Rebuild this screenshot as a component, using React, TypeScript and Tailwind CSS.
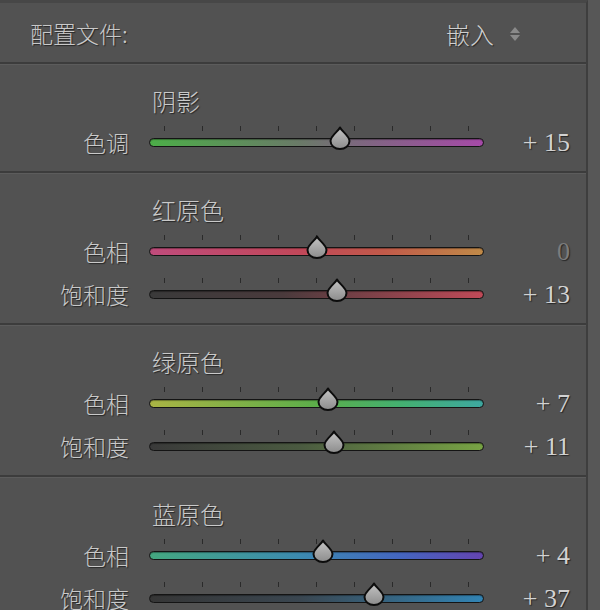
import React from 'react';

type Row = {
  label: string;
  value: number;
  track: string;
};

type Section = {
  title: string;
  rows: Row[];
};

const sections: Section[] = [
  {
    title: '阴影',
    rows: [
      {
        label: '色调',
        value: 15,
        track: 'bg-[linear-gradient(to_right,#4cae48,#6a7a68_45%,#7a6a7c_60%,#a64aa8)]',
      },
    ],
  },
  {
    title: '红原色',
    rows: [
      {
        label: '色相',
        value: 0,
        track: 'bg-[linear-gradient(to_right,#c04c7c,#c2485a_45%,#c25a4a_70%,#c08a48)]',
      },
      {
        label: '饱和度',
        value: 13,
        track: 'bg-[linear-gradient(to_right,#3a3a3a,#4a3a3c_40%,#c04a58)]',
      },
    ],
  },
  {
    title: '绿原色',
    rows: [
      {
        label: '色相',
        value: 7,
        track: 'bg-[linear-gradient(to_right,#aab444,#5cae4a_50%,#44b070_75%,#3ea8a0)]',
      },
      {
        label: '饱和度',
        value: 11,
        track: 'bg-[linear-gradient(to_right,#3a3a3a,#4a5a40_45%,#78a444)]',
      },
    ],
  },
  {
    title: '蓝原色',
    rows: [
      {
        label: '色相',
        value: 4,
        track: 'bg-[linear-gradient(to_right,#44a880,#3c8ab0_45%,#4466c0_75%,#6444b0)]',
      },
      {
        label: '饱和度',
        value: 37,
        track: 'bg-[linear-gradient(to_right,#363636,#3a4650_45%,#3284b4)]',
      },
    ],
  },
];

const cjk = "font-['Noto_Sans_CJK_SC','Noto_Sans',sans-serif] font-light";
const shadow = '[text-shadow:1px_1px_1px_rgba(0,0,0,0.55)]';

function Thumb() {
  return (
    <svg width="22" height="24" viewBox="0 0 22 24">
      <defs>
        <linearGradient id="thumb" x1="0" y1="0" x2="0" y2="1">
          <stop offset="0" stopColor="#c4c4c4" />
          <stop offset="1" stopColor="#8c8c8c" />
        </linearGradient>
      </defs>
      <path
        d="M11 1.5 C12.5 5 20.5 10 20.5 15 A9.5 8 0 0 1 1.5 15 C1.5 10 9.5 5 11 1.5 Z"
        fill="url(#thumb)"
        stroke="#0c0c0c"
        strokeWidth="2"
        strokeLinejoin="round"
      />
    </svg>
  );
}

function Slider({ row }: { row: Row }) {
  const left = 15 + ((row.value + 100) / 200) * 306 - 11;
  const text = row.value === 0 ? '0' : `+ ${row.value}`;
  return (
    <div className="flex items-center h-[43px]">
      <div className={`w-[129px] text-right text-[23px] leading-none text-[#c9c9c9] ${cjk} ${shadow}`}>
        {row.label}
      </div>
      <div className="relative ml-[20px] w-[335px] h-[9px]">
        <div className="absolute left-[15px] right-[15px] -top-[12px] flex justify-between">
          {Array.from({ length: 9 }).map((_, i) => (
            <div key={i} className="w-px h-[5px] bg-[#2a2a2a]" />
          ))}
        </div>
        <div
          className={`h-full rounded-full border-[1.5px] border-[#141414] ${row.track} [box-shadow:inset_0_1px_1px_rgba(0,0,0,0.35)]`}
        />
        <div className="absolute -top-[12px]" style={{ left }}>
          <Thumb />
        </div>
      </div>
      <div
        className={`w-[86px] text-right text-[26px] leading-none font-['Liberation_Serif',serif] ${shadow} ${
          row.value === 0 ? 'text-[#7c7c7c]' : 'text-[#d2d2d2]'
        }`}
      >
        {text}
      </div>
    </div>
  );
}

export default function App() {
  return (
    <div className="w-[600px] h-[610px] overflow-hidden bg-[#575757] flex">
      <div className="w-[588px] h-full bg-[#525252] border-t-[3px] border-t-[#474747] border-r-[2px] border-r-[#3e3e3e]">
        <div className="h-[59px] flex items-center pt-[2px]">
          <div className={`pl-[30px] text-[23px] leading-none text-[#c9c9c9] ${cjk} ${shadow}`}>配置文件:</div>
          <div className="ml-auto flex items-center pr-[66px]">
            <span className={`text-[24px] leading-none text-[#cfcfcf] ${cjk} ${shadow}`}>嵌入</span>
            <span className="ml-[16px] flex flex-col items-center gap-[2px]">
              <span className="w-0 h-0 border-l-[5px] border-r-[5px] border-b-[6px] border-l-transparent border-r-transparent border-b-[#8a8a8a]" />
              <span className="w-0 h-0 border-l-[5px] border-r-[5px] border-t-[6px] border-l-transparent border-r-transparent border-t-[#8a8a8a]" />
            </span>
          </div>
        </div>
        {sections.map((s) => (
          <div
            key={s.title}
            className="border-t-[2px] border-t-[#3c3c3c] [box-shadow:inset_0_1px_0_#5c5c5c] pt-[25px] pb-[7px]"
          >
            <div className={`h-[24px] pl-[152px] text-[24px] leading-[24px] text-[#c9c9c9] ${cjk} ${shadow}`}>
              {s.title}
            </div>
            <div className="mt-[8px]">
              {s.rows.map((r) => (
                <Slider key={r.label} row={r} />
              ))}
            </div>
          </div>
        ))}
      </div>
    </div>
  );
}
